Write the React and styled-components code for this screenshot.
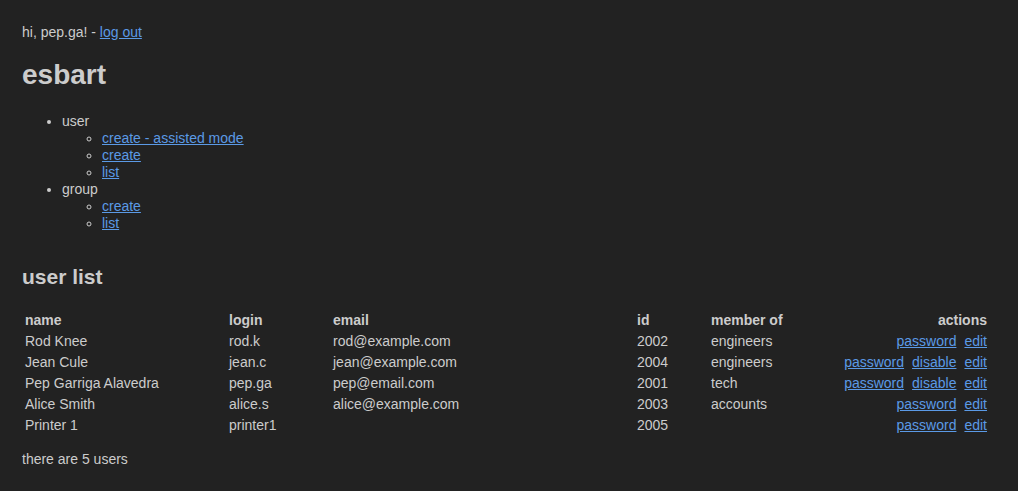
import React from "react";
import styled, { createGlobalStyle } from "styled-components";

const Global = createGlobalStyle`
  html, body { background: #222222; }
  body {
    margin: 0;
    font-family: "Liberation Sans", Arial, sans-serif;
    font-size: 14px;
    line-height: 17px;
    color: #cccccc;
  }
  a { color: #5b9ae6; }
`;

const Page = styled.div`
  padding: 24px 28px 22px 22px;
`;

const Greeting = styled.div``;

const Title = styled.h1`
  font-size: 28px;
  line-height: 33.6px;
  margin: 17px 0 21px;
`;

const Nav = styled.ul`
  margin: 0 0 14px;
  padding-left: 40px;
  list-style: disc;
`;

const SubNav = styled.ul`
  margin: 0;
  padding-left: 40px;
  list-style: circle;
`;

const Main = styled.section`
  display: flow-root;
`;

const SectionTitle = styled.h2`
  font-size: 21px;
  line-height: 25.2px;
  margin: 18.3px 0 20.4px;
`;

const Table = styled.table`
  width: 100%;
  border-spacing: 2px;
  table-layout: fixed;
`;

const Th = styled.th`
  padding: 1px;
  text-align: ${(p) => (p.$right ? "right" : "left")};
  font-weight: bold;
`;

const Td = styled.td`
  padding: 1px;
  text-align: ${(p) => (p.$right ? "right" : "left")};
  white-space: nowrap;
`;

const Actions = styled.span`
  display: inline-flex;
  gap: 8px;
`;

const Summary = styled.p`
  margin: 14px 0;
`;

const users = [
  { name: "Rod Knee", login: "rod.k", email: "rod@example.com", id: 2002, group: "engineers", disable: false },
  { name: "Jean Cule", login: "jean.c", email: "jean@example.com", id: 2004, group: "engineers", disable: true },
  { name: "Pep Garriga Alavedra", login: "pep.ga", email: "pep@email.com", id: 2001, group: "tech", disable: true },
  { name: "Alice Smith", login: "alice.s", email: "alice@example.com", id: 2003, group: "accounts", disable: false },
  { name: "Printer 1", login: "printer1", email: "", id: 2005, group: "", disable: false },
];

export default function App() {
  return (
    <Page>
      <Global />
      <Greeting>
        hi, pep.ga! - <a href="#">log out</a>
      </Greeting>
      <Title>esbart</Title>
      <Nav>
        <li>
          user
          <SubNav>
            <li><a href="#">create - assisted mode</a></li>
            <li><a href="#">create</a></li>
            <li><a href="#">list</a></li>
          </SubNav>
        </li>
        <li>
          group
          <SubNav>
            <li><a href="#">create</a></li>
            <li><a href="#">list</a></li>
          </SubNav>
        </li>
      </Nav>
      <Main>
        <SectionTitle>user list</SectionTitle>
        <Table>
          <colgroup>
            <col style={{ width: 202 }} />
            <col style={{ width: 102 }} />
            <col style={{ width: 302 }} />
            <col style={{ width: 72 }} />
            <col style={{ width: 120 }} />
            <col />
          </colgroup>
          <thead>
            <tr>
              <Th>name</Th>
              <Th>login</Th>
              <Th>email</Th>
              <Th>id</Th>
              <Th>member of</Th>
              <Th $right>actions</Th>
            </tr>
          </thead>
          <tbody>
            {users.map((u) => (
              <tr key={u.id}>
                <Td>{u.name}</Td>
                <Td>{u.login}</Td>
                <Td>{u.email}</Td>
                <Td>{u.id}</Td>
                <Td>{u.group}</Td>
                <Td $right>
                  <Actions>
                    <a href="#">password</a>
                    {u.disable && <a href="#">disable</a>}
                    <a href="#">edit</a>
                  </Actions>
                </Td>
              </tr>
            ))}
          </tbody>
        </Table>
        <Summary>there are {users.length} users</Summary>
      </Main>
    </Page>
  );
}
